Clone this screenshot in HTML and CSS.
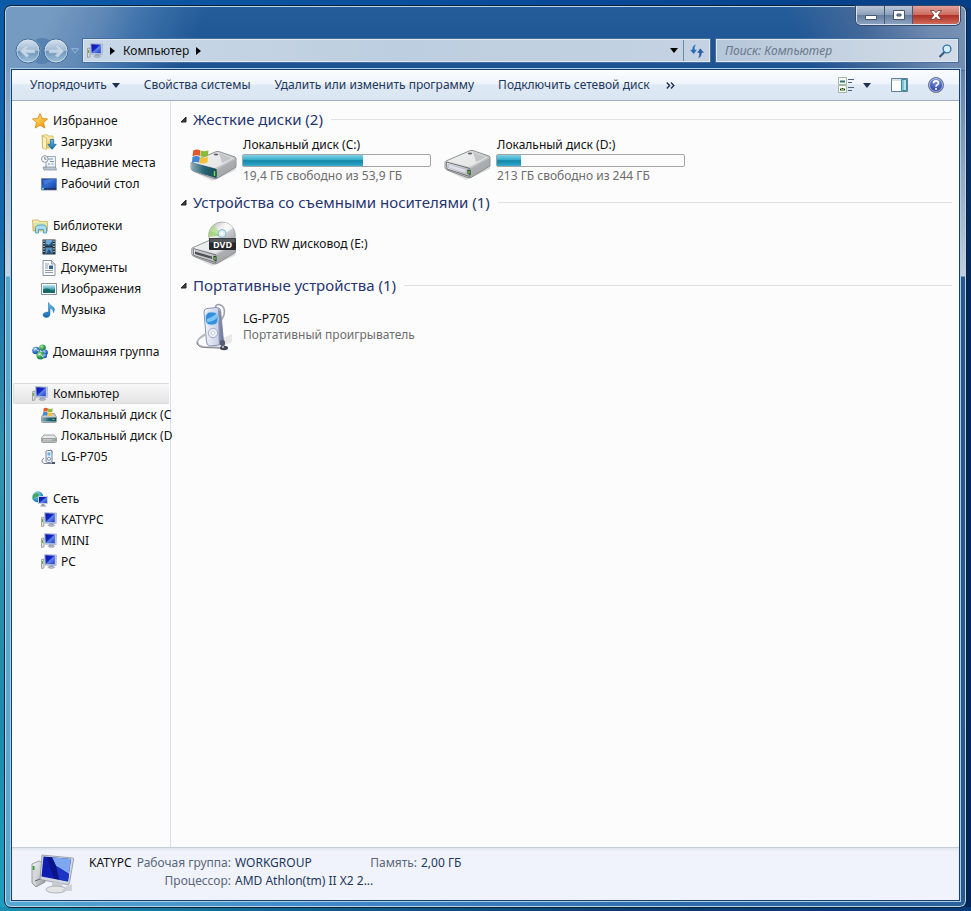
FILE: index.html
```html
<!DOCTYPE html>
<html lang="ru">
<head>
<meta charset="utf-8">
<title>Компьютер</title>
<link rel="stylesheet" href="styles.css">
</head>
<body>
<svg class="defs" aria-hidden="true">
  <defs>
    <linearGradient id="g-screen" x1="0" y1="0" x2="1" y2="1"><stop offset="0" stop-color="#0a12a0"/><stop offset=".45" stop-color="#1428c8"/><stop offset=".55" stop-color="#5f86e8"/><stop offset="1" stop-color="#1c34c0"/></linearGradient>
    <linearGradient id="g-metal" x1="0" y1="0" x2="1" y2="1"><stop offset="0" stop-color="#f8f8f8"/><stop offset=".55" stop-color="#c9cbcd"/><stop offset="1" stop-color="#8f9396"/></linearGradient>
    <linearGradient id="g-front" x1="0" y1="0" x2="1" y2="0"><stop offset="0" stop-color="#f1f1f1"/><stop offset="1" stop-color="#b9bbc0"/></linearGradient>
    <linearGradient id="g-teal" x1="0" y1="0" x2="1" y2="0"><stop offset="0" stop-color="#8aa9b4"/><stop offset=".5" stop-color="#27657c"/><stop offset="1" stop-color="#174b50"/></linearGradient>
    <linearGradient id="g-star" x1="0" y1="0" x2="1" y2="1"><stop offset="0" stop-color="#fff0a0"/><stop offset=".6" stop-color="#fbb52c"/><stop offset="1" stop-color="#e8890c"/></linearGradient>
    <linearGradient id="g-folder" x1="0" y1="0" x2="0" y2="1"><stop offset="0" stop-color="#fbf0b5"/><stop offset="1" stop-color="#e3c766"/></linearGradient>
    <linearGradient id="g-blue" x1="0" y1="0" x2="0" y2="1"><stop offset="0" stop-color="#62c3ef"/><stop offset="1" stop-color="#1567ae"/></linearGradient>
    <linearGradient id="g-desk" x1="0" y1="0" x2="1" y2="1"><stop offset="0" stop-color="#1b45a8"/><stop offset=".5" stop-color="#2f6bd0"/><stop offset="1" stop-color="#153c95"/></linearGradient>
    <linearGradient id="g-pic" x1="0" y1="0" x2="0" y2="1"><stop offset="0" stop-color="#bfe6f5"/><stop offset=".5" stop-color="#4ba6b6"/><stop offset="1" stop-color="#0f6575"/></linearGradient>
    <linearGradient id="g-orb" x1="0" y1="0" x2="0" y2="1"><stop offset="0" stop-color="#d5e1ec"/><stop offset=".48" stop-color="#a2bbd3"/><stop offset=".5" stop-color="#6d93b9"/><stop offset="1" stop-color="#9fc3dd"/></linearGradient>
    <linearGradient id="g-disc" x1="0" y1="0" x2="1" y2="1"><stop offset="0" stop-color="#a9abad"/><stop offset=".35" stop-color="#f4f4f4"/><stop offset=".6" stop-color="#c3c5c9"/><stop offset="1" stop-color="#95989c"/></linearGradient>
    <linearGradient id="g-player" x1="0" y1="0" x2="1" y2="0"><stop offset="0" stop-color="#f3f5fb"/><stop offset=".7" stop-color="#ccd3e8"/><stop offset="1" stop-color="#767da6"/></linearGradient>
    <radialGradient id="g-globe" cx=".35" cy=".3" r=".8"><stop offset="0" stop-color="#c8f2fb"/><stop offset=".5" stop-color="#3ba7cf"/><stop offset="1" stop-color="#105a8c"/></radialGradient>
    <radialGradient id="g-ballb" cx=".35" cy=".3" r=".8"><stop offset="0" stop-color="#a0ccfa"/><stop offset=".7" stop-color="#1c57b4"/></radialGradient>
    <radialGradient id="g-ballg" cx=".35" cy=".3" r=".8"><stop offset="0" stop-color="#a6e592"/><stop offset=".7" stop-color="#1e8a48"/></radialGradient>
    <radialGradient id="g-help" cx=".5" cy=".25" r=".8"><stop offset="0" stop-color="#7e9be0"/><stop offset="1" stop-color="#1c3193"/></radialGradient>
  </defs>

  <symbol id="flag" viewBox="0 0 16 16">
    <path d="M1 2.500Q4 .5 7.800 2L7.400 7.600Q4 6 .5 8Z" fill="#e0592b"/>
    <path d="M8.200 2.300Q12 4 15.500 2L15 7.600Q12 9 7.800 7.700Z" fill="#8db93a"/>
    <path d="M.4 8.500Q4 6.800 7.300 8.200L6.800 13.800Q3.500 12.400 0 14.200Z" fill="#3f88d0"/>
    <path d="M7.700 8.500Q12 10 15 8.200L14.600 13.600Q11 15.400 7.200 14Z" fill="#f6c136"/>
  </symbol>
  <symbol id="pc" viewBox="0 0 16 16">
    <path d="M.5 5.500 3 5V14L.5 14.500Z" fill="#dcdedb" stroke="#85898a" stroke-width=".7"/>
    <path d="M1.500 7v3" stroke="#54b13e"/>
    <path d="M3.500.6 15.600 1 15.200 11.600 4 11.200Z" fill="#bcc8e2" stroke="#8e9aba" stroke-width=".5"/>
    <path d="M4.300 1.300 14 1.700 13.700 10.200 4.700 10Z" fill="url(#g-screen)"/>
    <path d="M8.500 11.500h3.500l.5 1.500h-4.500Z" fill="#9ba4b8"/><ellipse cx="10.300" cy="13.300" rx="3.300" ry="1.100" fill="#b3bac9" stroke="#858da0" stroke-width=".5"/>
  </symbol>
  <symbol id="star" viewBox="0 0 16 16"><path d="M8 .6 10.200 5.400 15.500 6 11.500 9.500 12.700 15 8 12.100 3.300 15 4.500 9.500.5 6 5.800 5.400Z" fill="url(#g-star)" stroke="#d8891e" stroke-width=".9" stroke-linejoin="round"/></symbol>
  <symbol id="downloads" viewBox="0 0 16 16">
    <path d="M1 1.500 6 .5 7 2H12V14H1.500Z" fill="url(#g-folder)" stroke="#c9aa4d" stroke-width=".7"/><path d="M1.500 2 5.500 4V15.500L1.500 14Z" fill="#faf0bb" stroke="#c9aa4d" stroke-width=".6"/>
    <path d="M9.500 5.500h3.200v4.800h2.600L11.100 15.400 6.900 10.300h2.600Z" fill="url(#g-blue)" stroke="#1b5d9b" stroke-width=".7"/>
  </symbol>
  <symbol id="recent" viewBox="0 0 16 16">
    <path d="M5 1.500h9.500v11H5Z" fill="#eef3f7" stroke="#8698a8" stroke-width=".8"/>
    <path d="M7 4h5M9 6.500h4M7 9h2M10.500 9h2" stroke="#7795ad" stroke-width="1.100"/>
    <path d="M2 12h12.500l1 3H3Z" fill="#b9c8d4" stroke="#7c8d9c" stroke-width=".7"/>
    <circle cx="3.800" cy="4" r="3.300" fill="#f7f9fa" stroke="#8f9aa4"/><path d="M3.800 2v2.200H5.500" fill="none" stroke="#54606c" stroke-width=".8"/>
    <path d="M5 10.500v3" stroke="#8698a8"/>
  </symbol>
  <symbol id="desktop" viewBox="0 0 16 16"><path d="M.5 2.500h15v11.500H.5Z" fill="url(#g-desk)" stroke="#7086a8" stroke-width=".8"/><path d="M2 4 14 3 4 9Z" fill="#5d93e8" opacity=".55"/><path d="M1 12h14v1.600H1Z" fill="#24345e"/><circle cx="2" cy="12.700" r="1" fill="#7ad9f0"/></symbol>
  <symbol id="library" viewBox="0 0 16 16">
    <path d="M.5 2h6l1 1.500h8V13H1Z" fill="url(#g-folder)" stroke="#c6a84c" stroke-width=".7"/>
    <path d="M1.500 5h13v2h-13Z" fill="#d0e5b4"/>
    <path d="M3.500 15V9.500Q4.500 7 7 7h4.500Q14 7.500 14.500 9.500V15h-3v-3.500H6.500V15Z" fill="#a9dcf0" stroke="#3b97bd" stroke-width=".8"/>
  </symbol>
  <symbol id="video" viewBox="0 0 16 16">
    <path d="M1.500.5h13v15h-13Z" fill="#22313d"/><path d="M4.500 1h7v6h-7Z" fill="#6fa9d3"/><path d="M4.500 8.500h7v6.500h-7Z" fill="#5b93c0"/><path d="M4.500 4.500 8 6 11.500 2v5h-7ZM5 15 8 10l3.500 5Z" fill="#24547b"/>
    <path d="M3 1.500v13M13 1.500v13" stroke="#dce4ea" stroke-width="1.300" stroke-dasharray="1.200 1.400"/>
  </symbol>
  <symbol id="document" viewBox="0 0 16 16"><path d="M2 .5h8.500L14 4v11.500H2Z" fill="#fdfdfe" stroke="#7d8a9b" stroke-width=".9"/><path d="M10.500.5V4H14" fill="#d7dee8" stroke="#7d8a9b" stroke-width=".8"/><path d="M4 4h4M4 6h3M4 8h3M4 10.500h8M4 12.500h8" stroke="#8b9bb0"/><path d="M8 5.500h4v3.500H8Z" fill="#36628f"/></symbol>
  <symbol id="picture" viewBox="0 0 16 16"><path d="M.5 2.500h15v11H.5Z" fill="#fff" stroke="#73858f" stroke-width=".9"/><path d="M2 4h12v8H2Z" fill="url(#g-pic)"/><path d="M2 9Q6 6.500 9 8.500T14 8V12H2Z" fill="#176a68"/></symbol>
  <symbol id="music" viewBox="0 0 16 16"><path d="M7.500.5Q8.500 3 11.500 4.500 15 6.500 12.500 10.500 13 7.500 9 6V12.300Q8.800 15.400 5.300 15.500 1.800 15.200 2 12.500 2.800 9.800 7.500 10Z" fill="url(#g-blue)" stroke="#1b68a9" stroke-width=".5"/></symbol>
  <symbol id="homegroup" viewBox="0 0 16 16"><circle cx="4" cy="6.500" r="3.800" fill="url(#g-ballb)"/><circle cx="10.500" cy="3.700" r="3.300" fill="url(#g-ballg)"/><circle cx="13" cy="8.500" r="2.900" fill="url(#g-ballb)"/><circle cx="8.500" cy="11.500" r="4" fill="url(#g-ballg)"/><circle cx="12.800" cy="12" r="2.300" fill="url(#g-ballb)"/><path d="M2 5.500q2-2 3 0t2 1.500M6.500 11q2-2 3 0t2 2" fill="none" stroke="#e5fae8"/></symbol>
  <symbol id="disk-small" viewBox="0 0 16 16"><path d="M3 7h10l2.500 3v3.500q0 1-1 1h-13q-1 0-1-1V10Z" fill="#e9e9e9" stroke="#888c90" stroke-width=".8"/><path d="M1.500 10.500h13v2.700h-13Z" fill="#c5c8cb" stroke="#73777b" stroke-width=".6"/><path d="M11.500 12h2" stroke="#3bab36"/></symbol>
  <symbol id="disk-win-small" viewBox="0 0 16 16"><path d="M2.500 6.500h11l2 3.500v4.500q0 1-1 1h-13q-1 0-1-1V10Z" fill="#c3ccce" stroke="#788388" stroke-width=".7"/><path d="M1 10.500h14v4H1Z" fill="url(#g-teal)"/><path d="M11.500 12.500h2" stroke="#61dc52"/><use href="#flag" x="2" y="0" width="10" height="10"/></symbol>
  <symbol id="player-small" viewBox="0 0 16 16"><path d="M8 2Q9 .3 11 1.500V4M3 9Q-1 12 3 14.500H12" fill="none" stroke="#7a8299"/><rect x="5" y="1.500" width="6" height="12" rx="1.500" fill="#edf0f8" stroke="#7a8299"/><path d="M6.500 3.500h3v3h-3Z" fill="#69aee5"/><circle cx="8" cy="9.800" r="1.600" fill="#fff" stroke="#7d93b8"/><path d="M11 13h3v2h-3Z" fill="#4d5264"/></symbol>
  <symbol id="network" viewBox="0 0 16 16"><circle cx="5.800" cy="5.800" r="5.500" fill="url(#g-globe)"/><path d="M2 3Q5 1 6.500 3T3 6.500 2 9Q-.5 6 2 3Z" fill="#48a55c"/><path d="M6.500 5.500h9v7h-9Z" fill="url(#g-screen)" stroke="#c7d2e8"/><path d="M9.500 13h3v1.500H14v1H8.500v-1h1Z" fill="#8e98b0"/></symbol>

  <symbol id="drive" viewBox="0 0 48 32">
    <path d="M4 22 22 31 46 20 46 14Z" fill="#aaa" opacity=".35"/>
    <path d="M2 12 25 2Q27 1 29 1.600L45 7Q46.500 8 46 9.500V17L27 28.500Q25 29.500 22 28L3 21Q1 20 1 18V13.500Q1 12.500 2 12Z" fill="url(#g-metal)" stroke="#777b7e" stroke-width=".8"/>
    <path d="M4 12 26 2.800 43.500 8.500 25.500 18Z" fill="#f0f0f0" opacity=".75"/><path d="M29 3 42 8.500 32 13Z" fill="#b4b7b9" opacity=".7"/>
    <path d="M2.500 13 26 19.500V27.500L3 20Z" fill="url(#g-front)" stroke="#6f7274"/><path d="M4.500 15 22 20.500V24.500L4.500 18.800Z" fill="#dedfe8" stroke="#aaacb7" stroke-width=".6"/>
    <path d="M27 19.500 45.500 9V16.500L27.500 27.500Z" fill="#a2a6a8" opacity=".7"/>
    <path d="M23.500 20.500 26.500 21.200V26L23.500 25Z" fill="#243b21"/><path d="M25 21.800v3" stroke="#79e245" stroke-width="1.200"/><ellipse cx="26" cy="4.500" rx="2.300" ry=".9" fill="#63676b"/>
  </symbol>
  <symbol id="drive-c" viewBox="0 0 48 34"><use href="#drive" x="0" y="2" width="48" height="32"/><path d="M1.500 14.500 26.500 21V30L3 23Q1.500 22 1.500 20Z" fill="url(#g-teal)"/><path d="M24.500 23v5" stroke="#74dc4b" stroke-width="1.500"/><use href="#flag" x="2" y="0" width="17" height="17"/></symbol>
  <symbol id="player" viewBox="0 0 40 48">
    <path d="M27 36 38 31V39L27 44Z" fill="#aaa" opacity=".25"/>
    <path d="M22 9Q20 1 25 1.500 32 3 30 12L27 18" fill="none" stroke="#9b9fad" stroke-width="1.500"/>
    <path d="M10 9Q10 6 13 5.500L22 4.500Q26 4.500 26.500 7L29.500 38Q29 41 25 42L16 43Q13 42.500 12.500 39Z" fill="url(#g-player)" stroke="#8c93b4"/>
    <path d="M24 5.500 26.500 9 29.500 38 25 42Z" fill="#626991" opacity=".55"/>
    <rect x="11.500" y="9" width="12.500" height="13" rx="5" fill="#338fdd" stroke="#b2d8f4"/><path d="M13 16Q18 14 23 10.500V15Q19 19 13 19Z" fill="#97d6f8" opacity=".75"/>
    <circle cx="19" cy="30" r="4.700" fill="#e9edf7" stroke="#a4adc7"/><circle cx="19" cy="30" r="1.900" fill="#fff" stroke="#b5bccf" stroke-width=".6"/>
    <path d="M12 31Q1 37 4 41T17 44L29 45" fill="none" stroke="#b8bac3" stroke-width="2"/><path d="M3 39Q3 45 12 44.500L26 45" fill="none" stroke="#787c89" stroke-width=".8"/>
    <rect x="26" y="37" width="5" height="6" rx="2" fill="#595d6f"/><ellipse cx="30" cy="45" rx="4" ry="2.200" fill="#424555"/><circle cx="29" cy="44" r="1" fill="#d2d5df"/>
  </symbol>
  <symbol id="computer" viewBox="0 0 46 40">
    <path d="M2 10 9 7 15 10V28L6 33 2 29Z" fill="url(#g-metal)" stroke="#777c80" stroke-width=".7"/><path d="M3 11 6 13V32L3 29Z" fill="#d5d7da"/><path d="M3.500 12v4" stroke="#379b43" stroke-width="1.800"/><path d="M5 27 15 23" stroke="#5a5e62"/>
    <path d="M12 1 43 4Q44 4 43.500 6L39.500 29Q39 31 37 30.500L10 25.500Z" fill="#d3d8e0" stroke="#8d929c" stroke-width=".8"/>
    <path d="M13.500 2.500 41 5 38 27.500 11.500 22.500Z" fill="#0f1cb0"/><path d="M22 3.300 41 5 39 20Q30 14 26 12Z" fill="#7fa7ef"/><path d="M26 12Q32 16 39 20L38 27.500 29 25.600Z" fill="#1d35c4"/><path d="M22 3.300 26 12 29 25.600 24 24.700 17 3Z" fill="#0a1486"/>
    <path d="M22 27.500 32 29.500 33 35H22Z" fill="#c9ccd1"/><ellipse cx="26" cy="35.500" rx="10" ry="3.500" fill="#e2e4e7" stroke="#a1a4a9" stroke-width=".8"/><path d="M36 32 42 30V37H32Z" fill="#c8cace" opacity=".8"/>
  </symbol>
</svg>

<main class="window">
  <header class="chrome">
    <div class="titlebar">
      <div class="caption">
        <button class="cap cap-min" aria-label="Свернуть"><svg width="12" height="12" viewBox="0 0 12 12"><path d="M.5 6.500h11v4H.5Z" fill="#fff" stroke="#46576e"/></svg></button>
        <button class="cap cap-max" aria-label="Развернуть"><svg width="12" height="12" viewBox="0 0 12 12"><path fill-rule="evenodd" d="M.5 1.500h11v9H.5ZM4 5v2h4V5Z" fill="#fff" stroke="#46576e"/></svg></button>
        <button class="cap cap-close" aria-label="Закрыть"><svg width="12" height="12" viewBox="0 0 12 12"><path d="M.5 1.500H4L6 3.800 8 1.500h3.500L8.200 6l3.300 4.500H8L6 8.200 4 10.500H.5L3.800 6Z" fill="#fff" stroke="#6d3030" stroke-width=".8"/></svg></button>
      </div>
    </div>
    <nav class="navbar" aria-label="Навигация">
      <div class="travel">
        <button class="orb" aria-label="Назад"><svg width="26" height="26" viewBox="0 0 26 26"><circle cx="13" cy="13" r="12" fill="url(#g-orb)" stroke="#416c96"/><circle cx="13" cy="13" r="11" fill="none" stroke="#d5e3ef" opacity=".7"/><path d="M5 13 11.500 6.500 14 8.500 11.500 11.300H20v3.600H11.500L14 17.600 11.500 19.500Z" fill="#c3d5e6" stroke="#9db8d0" stroke-width=".6"/></svg></button>
        <button class="orb" aria-label="Вперёд"><svg width="26" height="26" viewBox="0 0 26 26"><circle cx="13" cy="13" r="12" fill="url(#g-orb)" stroke="#416c96"/><circle cx="13" cy="13" r="11" fill="none" stroke="#d5e3ef" opacity=".7"/><path d="M21 13 14.500 6.500 12 8.500 14.500 11.300H6v3.600H14.500L12 17.600 14.500 19.500Z" fill="#c3d5e6" stroke="#9db8d0" stroke-width=".6"/></svg></button>
        <button class="history" aria-label="Последние страницы"><svg width="8" height="6" viewBox="0 0 8 6"><path d="M.7.7h6.600L4 4.900Z" fill="#568abb" stroke="#a4c7e4" stroke-width=".8"/></svg></button>
      </div>
      <div class="address">
        <svg class="i16"><use href="#pc"/></svg>
        <button class="crumb-arrow" aria-label="Корень"><svg width="5" height="8" viewBox="0 0 5 8"><path d="M0 0 5 4 0 8Z"/></svg></button>
        <button class="crumb">Компьютер</button>
        <button class="crumb-arrow" aria-label="Развернуть путь"><svg width="5" height="8" viewBox="0 0 5 8"><path d="M0 0 5 4 0 8Z"/></svg></button>
        <button class="drop" aria-label="Предыдущие расположения"><svg width="8" height="5" viewBox="0 0 8 5"><path d="M0 0h8L4 5Z"/></svg></button>
        <button class="refresh" aria-label="Обновить"><svg width="16" height="16" viewBox="0 0 16 16"><path d="M7.500 1Q3 2 3 6.500H.5L4.700 11.500 8.500 6.500H6Q5.500 3.500 7.500 1Z" fill="#2e6fb4" stroke="#dfe9f4" stroke-width=".5"/><path d="M8.500 15.500Q13 14.500 13 10H15.500L11.300 5 7.500 10H10Q10.500 13 8.500 15.500Z" fill="#2e5fa4" stroke="#dfe9f4" stroke-width=".5"/></svg></button>
      </div>
      <label class="search">
        <input type="search" placeholder="Поиск: Компьютер" aria-label="Поиск: Компьютер">
        <svg width="14" height="14" viewBox="0 0 14 14"><path d="M7 7.500 1.500 13" stroke="#35597f" stroke-width="2.200"/><circle cx="9" cy="5" r="3.900" fill="#d9edf6" stroke="#3178ab" stroke-width="1.400"/></svg>
      </label>
    </nav>
  </header>

  <section class="client">
    <div class="toolbar">
      <button class="tool">Упорядочить <svg width="8" height="5" viewBox="0 0 8 5"><path d="M0 0h8L4 5Z" fill="#1e3250"/></svg></button>
      <button class="tool">Свойства системы</button>
      <button class="tool">Удалить или изменить программу</button>
      <button class="tool">Подключить сетевой диск</button>
      <button class="tool more" aria-label="Ещё"><svg width="9" height="7" viewBox="0 0 9 7"><path d="M.8.5 3.600 3.500.8 6.500M5 .5 7.800 3.500 5 6.500" fill="none" stroke="#1e3250" stroke-width="1.400"/></svg></button>
      <div class="tool-icons">
        <button class="view" aria-label="Представление">
          <svg width="17" height="16" viewBox="0 0 17 16"><path d="M.5.5h8v7h-8ZM.5 8.500h8v7h-8Z" fill="#f5faf4" stroke="#a5b6a4"/><path d="M2 3.500h5V5.500H2Z" fill="#376c76"/><path d="M2 11h5v3H2Z" fill="#8fae78"/><path d="M2 12h1v1H2ZM4 11h1v1H4ZM6 12h1v1H6Z" fill="#182d26"/><path d="M10 2.500h6M10 5.500h4M10 10.500h6M10 13.500h4" stroke="#50627d"/></svg>
          <svg width="8" height="5" viewBox="0 0 8 5"><path d="M0 0h8L4 5Z" fill="#1e3250"/></svg>
        </button>
        <button class="preview" aria-label="Область просмотра"><svg width="17" height="14" viewBox="0 0 17 14"><path d="M.5.5h16v13H.5Z" fill="#fff" stroke="#617f95"/><path d="M1 1h15v2H1Z" fill="#d6e3ec"/><path d="M10.500 1.500h5v11h-5Z" fill="#7ec5d5" stroke="#3b8aa0"/><path d="M13 2v10h2V2Z" fill="#b9e5ec"/></svg></button>
        <button class="help" aria-label="Справка"><svg width="16" height="16" viewBox="0 0 16 16"><circle cx="8" cy="8" r="7.500" fill="url(#g-help)" stroke="#69718c"/><circle cx="8" cy="8" r="6.500" fill="none" stroke="#cad5f1" stroke-width=".8"/><path d="M5.500 6.300Q5.500 3.900 8 3.900T10.500 6.100Q10.500 7.400 9 8.100 8 8.600 8 9.800" fill="none" stroke="#fff" stroke-width="1.700"/><circle cx="8" cy="12" r="1.100" fill="#fff"/></svg></button>
      </div>
    </div>

    <div class="body">
      <nav class="tree" aria-label="Папки">
        <ul>
          <li><a href="#"><svg class="i16"><use href="#star"/></svg>Избранное</a></li>
          <li class="child"><a href="#"><svg class="i16"><use href="#downloads"/></svg>Загрузки</a></li>
          <li class="child"><a href="#"><svg class="i16"><use href="#recent"/></svg>Недавние места</a></li>
          <li class="child"><a href="#"><svg class="i16"><use href="#desktop"/></svg>Рабочий стол</a></li>
        </ul>
        <ul>
          <li><a href="#"><svg class="i16"><use href="#library"/></svg>Библиотеки</a></li>
          <li class="child"><a href="#"><svg class="i16"><use href="#video"/></svg>Видео</a></li>
          <li class="child"><a href="#"><svg class="i16"><use href="#document"/></svg>Документы</a></li>
          <li class="child"><a href="#"><svg class="i16"><use href="#picture"/></svg>Изображения</a></li>
          <li class="child"><a href="#"><svg class="i16"><use href="#music"/></svg>Музыка</a></li>
        </ul>
        <ul>
          <li><a href="#"><svg class="i16"><use href="#homegroup"/></svg>Домашняя группа</a></li>
        </ul>
        <ul>
          <li class="selected"><a href="#" aria-current="page"><svg class="i16"><use href="#pc"/></svg>Компьютер</a></li>
          <li class="child"><a href="#"><svg class="i16"><use href="#disk-win-small"/></svg>Локальный диск (C</a></li>
          <li class="child"><a href="#"><svg class="i16"><use href="#disk-small"/></svg>Локальный диск (D</a></li>
          <li class="child"><a href="#"><svg class="i16"><use href="#player-small"/></svg>LG-P705</a></li>
        </ul>
        <ul>
          <li><a href="#"><svg class="i16"><use href="#network"/></svg>Сеть</a></li>
          <li class="child"><a href="#"><svg class="i16"><use href="#pc"/></svg>KATYPC</a></li>
          <li class="child"><a href="#"><svg class="i16"><use href="#pc"/></svg>MINI</a></li>
          <li class="child"><a href="#"><svg class="i16"><use href="#pc"/></svg>PC</a></li>
        </ul>
      </nav>

      <div class="content">
        <section class="group">
          <h2><svg width="7" height="7" viewBox="0 0 7 7"><path d="M6 1v5H1Z" fill="#404040" stroke="#222"/></svg>Жесткие диски (2)</h2>
          <div class="items">
            <article class="item">
              <svg class="icon drive-icon"><use href="#drive-c"/></svg>
              <div class="info"><div class="name">Локальный диск (C:)</div><div class="meter" role="meter" aria-label="Занято на диске C" aria-valuenow="64" aria-valuemin="0" aria-valuemax="100"><div class="fill" style="width:64%"></div></div><div class="sub">19,4 ГБ свободно из 53,9 ГБ</div></div>
            </article>
            <article class="item">
              <svg class="icon drive-icon"><use href="#drive"/></svg>
              <div class="info"><div class="name">Локальный диск (D:)</div><div class="meter" role="meter" aria-label="Занято на диске D" aria-valuenow="13" aria-valuemin="0" aria-valuemax="100"><div class="fill" style="width:13%"></div></div><div class="sub">213 ГБ свободно из 244 ГБ</div></div>
            </article>
          </div>
        </section>
        <section class="group">
          <h2><svg width="7" height="7" viewBox="0 0 7 7"><path d="M6 1v5H1Z" fill="#404040" stroke="#222"/></svg>Устройства со съемными носителями (1)</h2>
          <div class="items">
            <article class="item">
              <svg class="icon" viewBox="0 0 48 46">
                <use href="#drive" x="0" y="15" width="48" height="31"/><path d="M5 30.500 22 35.500V38L5 33Z" fill="#4d5055"/>
                <circle cx="32" cy="14.500" r="13.500" fill="url(#g-disc)" stroke="#9a9da1" stroke-width=".7"/>
                <path d="M32 14.500 19.500 11Q20 7 24 4Z" fill="#a6da72" opacity=".6"/><path d="M32 14.500 18.700 16 19.500 10Z" fill="#8fcf5c" opacity=".7"/><path d="M32 14.500 35 1.500Q40 3 43 7Z" fill="#fff" opacity=".8"/>
                <circle cx="32" cy="12.500" r="4" fill="#d7eef5" stroke="#8fb6c7"/><circle cx="32" cy="12.500" r="1.500" fill="#fff"/>
                <rect x="19" y="17" width="27" height="12" rx="1" fill="#25272a"/><path d="M19.500 17.500h26v4h-26Z" fill="#55585b"/>
                <text x="32.500" y="26.500" text-anchor="middle" class="dvd-text">DVD</text>
              </svg>
              <div class="info"><div class="name">DVD RW дисковод (E:)</div></div>
            </article>
          </div>
        </section>
        <section class="group">
          <h2><svg width="7" height="7" viewBox="0 0 7 7"><path d="M6 1v5H1Z" fill="#404040" stroke="#222"/></svg>Портативные устройства (1)</h2>
          <div class="items">
            <article class="item"><svg class="icon"><use href="#player"/></svg><div class="info"><div class="name">LG-P705</div><div class="sub">Портативный проигрыватель</div></div></article>
          </div>
        </section>
      </div>
    </div>

    <footer class="details">
      <svg class="pc-icon"><use href="#computer"/></svg>
      <dl class="props">
        <dt class="host">KATYPC</dt>
        <dt class="workgroup">Рабочая группа:</dt><dd>WORKGROUP</dd>
        <dt class="memory">Память:</dt><dd>2,00 ГБ</dd>
        <dt class="cpu">Процессор:</dt><dd>AMD Athlon(tm) II X2 2...</dd>
      </dl>
    </footer>
  </section>
</main>
</body>
</html>
```
FILE: styles.css
```css
* { box-sizing: border-box; }

body {
  margin: 0;
  min-height: 100vh;
  display: flex;
  padding: 5px 4px 3px;
  font: 12px/16px "Noto Sans", "Open Sans", sans-serif;
  color: #111;
  background:
    linear-gradient(90deg, #1b8fb0, #10628c 30%, #0b3d6c 65%, #063a7c) bottom / 100% 4px no-repeat,
    linear-gradient(90deg, #0d5aa8, #0a4c9a 50%, #063f86) top / 100% 8px no-repeat,
    linear-gradient(180deg, #083a7c, #04285a 30%, #03265a) right / 8px 100% no-repeat,
    linear-gradient(180deg, #0d5aa8, #1268a8 25%, #2f93b0 50%, #1b8ab0 80%, #1c9fc0);
}

button, input { font: inherit; color: inherit; }
button { margin: 0; padding: 0; border: 0; background: none; }
button svg { display: block; }
ul, dl, dd, h2 { margin: 0; padding: 0; }
ul { list-style: none; }
.defs { position: absolute; width: 0; height: 0; }
.i16 { width: 16px; height: 16px; flex: none; }
.dvd-text { font: bold 9px "Open Sans", sans-serif; fill: #fff; }

.window {
  flex: 1;
  min-width: 0;
  display: flex;
  flex-direction: column;
  padding: 0 6px 6px;
  border: 1px solid #0c2038;
  border-radius: 7px;
  box-shadow: inset 0 0 0 1px #b9d5ea;
  background:
    linear-gradient(180deg, transparent 64px, #7d9fc4 65px, #c0d4e4 270px, transparent 271px) left / 7px 100% no-repeat,
    linear-gradient(180deg, transparent 64px, #6482aa 65px, #c3ced9 270px, transparent 271px) right / 7px 100% no-repeat,
    linear-gradient(90deg, #55a9d2, #3f86c8 35%, #2c67a8 75%, #2b6099) bottom / 100% 7px no-repeat,
    linear-gradient(115deg, #769bc2 15%, #6189b7 30%, #3c71a9 44%, transparent 62%) top left / 300px 64px no-repeat,
    linear-gradient(65deg, transparent 45%, #44699a 66%, #6f8ab0 86%, #7a93b4) top right / 300px 64px no-repeat,
    linear-gradient(180deg, #245d9a, #1d5190 64px, transparent 64px),
    linear-gradient(90deg, #58a9cc, #58a9cc 50%, #27588f 50%);
}

.chrome { height: 63px; }
.titlebar { height: 27px; display: flex; justify-content: flex-end; }
.caption {
  display: flex;
  height: 19px;
  border: 1px solid #dce6f0;
  border-top: 0;
  border-radius: 0 0 5px 5px;
  box-shadow: 0 0 0 1px #34486a;
  overflow: hidden;
}
.cap {
  width: 28px;
  display: grid;
  place-items: center;
  border-right: 1px solid #46597a;
  background: linear-gradient(#b9c6d7, #8ea1bb 48%, #637d9f 50%, #8ba3bf);
}
.cap-close { width: 46px; border: 0; background: linear-gradient(#e1a29a, #cc6c5f 48%, #ac2f22 50%, #ce6958); }

.navbar { height: 35px; display: flex; align-items: center; padding: 0 2px 0 4px; }
.travel { display: flex; align-items: center; gap: 2px; margin-right: 4px; }
.travel .orb:first-child { border-radius: 13px; box-shadow: 14px 0 0 #5582b0; }
.orb { width: 26px; height: 26px; position: relative; }
.address, .search {
  display: flex;
  align-items: center;
  height: 23px;
  border: 1px solid #dce7f1;
  outline: 1px solid #456f9d;
  background: linear-gradient(90deg, #c9d8e7, #bdcee0 50%, #c4d2e2);
}
.address { flex: 1; min-width: 0; padding-left: 3px; margin-right: 6px; }
.crumb-arrow { padding: 0 8px 0 7px; }
.drop { margin-left: auto; padding: 8px 5px; }
.refresh { align-self: stretch; width: 26px; display: grid; place-items: center; border-left: 1px solid #668bb0; }
.search { flex: 0 1 242px; padding: 0 5px 0 8px; background: linear-gradient(90deg, #b6c7da, #d2dce7); }
.search input { flex: 1; min-width: 0; width: 0; padding: 0; border: 0; background: none; outline: none; font-style: italic; }
.search input::placeholder { color: #69788a; opacity: 1; }

.client {
  flex: 1;
  display: flex;
  flex-direction: column;
  border: 1px solid #173f69;
  box-shadow: 0 0 0 1px #a9cfe6;
  background: #fcfcfc;
}
.toolbar {
  height: 31px;
  display: flex;
  align-items: center;
  gap: 24px;
  padding: 0 15px 0 18px;
  border-bottom: 1px solid #a0afc3;
  background: linear-gradient(#fbfdff, #eff5fc 45%, #dfe9f5 50%, #dae5f3);
  color: #1e395b;
}
.tool { display: flex; align-items: center; gap: 5px; white-space: nowrap; }
.more { margin-left: -8px; }
.tool-icons { display: flex; align-items: center; margin-left: auto; gap: 20px; }
.view { display: flex; align-items: center; gap: 8px; }

.body { flex: 1; display: flex; min-height: 0; }
.tree { flex: none; width: 159px; padding: 9px 1px 0; border-right: 1px solid #d5e1f0; }
.tree ul { margin-bottom: 21px; }
.tree li { height: 21px; padding-left: 19px; }
.tree .child { padding-left: 28px; }
.tree .child a { gap: 4px; }
.tree a { display: flex; align-items: center; gap: 5px; height: 21px; color: inherit; text-decoration: none; white-space: nowrap; }
.tree .selected { border: 1px solid #dcdcdc; border-right: 0; border-radius: 2px 0 0 2px; padding-left: 18px; background: linear-gradient(#f8f8f8, #e4e4e4); }
.tree .selected a { height: 19px; }

.content { flex: 1; min-width: 0; padding: 7px 7px 0 9px; }
.group { height: 83px; }
h2 { display: flex; align-items: center; height: 22px; font-size: 15px; line-height: 22px; font-weight: 400; color: #27356f; white-space: nowrap; }
h2 svg { margin-right: 6px; flex: none; }
h2::after { content: ""; flex: 1; height: 1px; margin-left: 8px; background: #dfe1e5; }
.items { display: flex; }
.item { width: 254px; height: 61px; display: flex; align-items: center; gap: 4px; padding-left: 10px; }
.icon { width: 48px; height: 48px; flex: none; }
.drive-icon { height: 34px; margin-top: 8px; }
.info { width: 189px; }
.name, .sub { padding-left: 1px; line-height: 16px; white-space: nowrap; }
.sub { color: #6d6d6d; }
.meter { height: 13px; margin: 1px 0; border: 1px solid #a5a5a5; border-radius: 2px; background: #fcfcfc; }
.fill { height: 100%; background: linear-gradient(#7cd2e5, #3fb2cf 40%, #178cad 50%, #1c91b4 70%, #35aed0); }

.details { display: flex; align-items: flex-start; height: 53px; padding: 6px 18px 0; border-top: 1px solid #c3ced9; background: #f0f3fb; box-shadow: inset 0 2px 2px #e1e7f0; }
.pc-icon { width: 46px; height: 40px; margin-right: 13px; flex: none; }
.props { display: grid; grid-template-columns: 43px 95px 130px 48px auto; column-gap: 4px; grid-auto-rows: 18px; line-height: 18px; white-space: nowrap; color: #1e395b; }
.props dt { color: #5a6779; text-align: right; }
.props .host { color: #111; text-align: left; }
.props .cpu { grid-column: 2; }
```
